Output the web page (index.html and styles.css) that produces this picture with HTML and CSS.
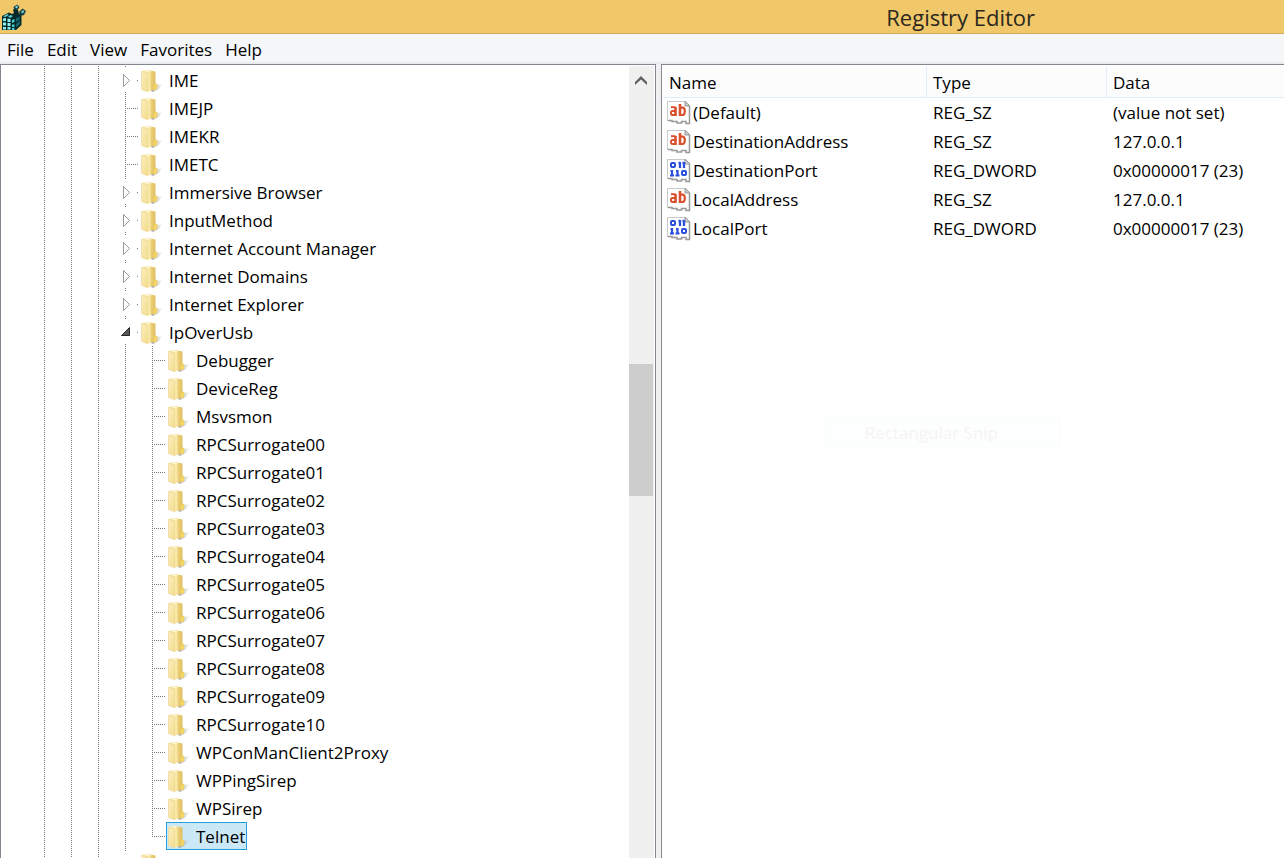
FILE: index.html
```
<!DOCTYPE html>
<html lang="en">
<head>
<meta charset="utf-8">
<title>Registry Editor</title>
<link rel="stylesheet" href="styles.css">
</head>
<body>
<svg class="defs" aria-hidden="true">
  <defs>
    <linearGradient id="gold" x1="0" y1="0" x2="1" y2="0">
      <stop offset="0" stop-color="#f8e6a0"/><stop offset="0.6" stop-color="#eed27c"/><stop offset="1" stop-color="#e0bf62"/>
    </linearGradient>
    <linearGradient id="cover" x1="0" y1="0" x2="1" y2="1">
      <stop offset="0" stop-color="#fbefc0"/><stop offset="1" stop-color="#f3dc8c"/>
    </linearGradient>
    <linearGradient id="shade" x1="0" y1="0" x2="1" y2="0">
      <stop offset="0" stop-color="#888" stop-opacity="0.8"/><stop offset="1" stop-color="#bbb" stop-opacity="0.1"/>
    </linearGradient>
  </defs>
  <symbol id="folder" viewBox="0 0 24 24">
    <path d="M12 22L17 16L23.500 15L20 20L14 23Z" fill="url(#shade)"/>
    <path d="M3 2L9 1L16.500 2.500V20.500L9 22L3 20Z" fill="url(#gold)"/>
    <path d="M4 1.500L9 1L12 2.500L9 4Z" fill="#fcf4cf"/>
    <path d="M2.500 2.500L9 4V22.800L2.500 20.500Z" fill="url(#cover)" stroke="#ecd796" stroke-width="0.700"/>
    <path d="M9 4L11.500 3.200V21.800L9 22.800Z" fill="#f8e8a6"/>
    <path d="M15 15H18V19.500L16 21H14.500Z" fill="#f6d866" stroke="#e2c253" stroke-width="0.500"/>
  </symbol>
  <symbol id="tee" viewBox="0 0 27 28">
    <path d="M13.500 0V28M13 14.500H27" stroke="#777" stroke-dasharray="1 1" fill="none"/>
  </symbol>
  <symbol id="last" viewBox="0 0 27 28">
    <path d="M13.500 0V15M13 14.500H27" stroke="#777" stroke-dasharray="1 1" fill="none"/>
  </symbol>
  <symbol id="closed" viewBox="0 0 27 28">
    <path d="M13.500 0V2M13.500 26V28M25 14.500H28" stroke="#777" stroke-dasharray="1 1" fill="none"/>
    <path d="M11.500 8.500V20.500L17.500 14.500Z" fill="#fff" stroke="#999"/>
  </symbol>
  <symbol id="open" viewBox="0 0 27 28">
    <path d="M13.500 0V2M13.500 26V28M25 14.500H28" stroke="#777" stroke-dasharray="1 1" fill="none"/>
    <path d="M17.500 9.500V17.500H9.500Z" fill="#595959" stroke="#262626"/>
  </symbol>
  <symbol id="page" viewBox="0 0 24 24">
    <path d="M.5 .5H18L23 5V22.500H19L16 19.500L13.500 21.500H9L6 19.500H.5Z" fill="#fff"/>
    <path d="M.5 20V.5H18" fill="none" stroke="#c9c9c9"/>
    <path d="M18 0L23 5H18Z" fill="#ccc" stroke="#999"/>
    <path d="M22.500 5V22.500H19V20.500H14.500V22H10V20.500H5V19.500H1" fill="none" stroke="#999" stroke-width="1.500"/>
  </symbol>
  <symbol id="string" viewBox="0 0 24 24">
    <use href="#page"/>
    <g fill="none" stroke="#d9512c">
      <path d="M4 6.200H8.500" stroke-width="2"/>
      <path d="M8.500 6V15" stroke-width="2.600"/>
      <path d="M8.500 10H5.500Q4 10 4 12T5.500 14H8.500" stroke-width="2"/>
      <path d="M13 3V15" stroke-width="2.600"/>
      <path d="M13 6.700H16Q17.800 7 17.800 10.300T16 14H13" stroke-width="2.200"/>
    </g>
  </symbol>
  <symbol id="binary" viewBox="0 0 24 24">
    <use href="#page"/>
    <g fill="none" stroke="#2b4fdc" stroke-width="2">
      <rect x="4" y="4" width="4" height="4" rx="1"/>
      <path d="M13 3V9M11.500 4H13M17 3V9M15.500 4H17" stroke-width="2.300"/>
      <path d="M5 11V17M3.500 12H5M10.500 11V17M9 12H10.500M3 16.500H7M8.500 16.500H12.500" stroke-width="2.200"/>
      <rect x="15" y="12" width="4" height="4" rx="1"/>
    </g>
  </symbol>
</svg>

<header class="titlebar">
  <svg class="logo" viewBox="0 0 26 26" aria-hidden="true">
    <path d="M2 13L9 9.500L12 11L14 10L13 7L15 5L18 7L19 11L21.500 11V22L15 28H2Z" fill="#06282b" transform="translate(0 -1)"/>
    <path d="M13.500 3L17 .5L19.500 3L17.500 6L14.500 6Z" fill="#123f43"/>
    <path d="M15 3L17 1.500L18 3L16.500 4.500Z" fill="#8ddbe0"/>
    <path d="M19 8L22.500 4.500L26 7L24 11L20 12Z" fill="#123f43"/>
    <path d="M21 8L23 6L24.500 7.500L22.500 9.500Z" fill="#79cbd2"/>
    <path d="M3 12.500L7 10L9 11L5.500 13ZM8 12.800L10.500 11L13 12L10.500 14Z" fill="#5cc8cb"/>
    <path d="M3 14.500L6 14V17H3ZM7.500 14.500L10.500 15V18H7.500ZM3 18.500H6V21.500H3ZM7.500 19H10.500V22H7.500ZM3 23H6V25.500H3ZM7.500 23H10.500V25.500H7.500Z" fill="#8af2f1"/>
    <path d="M12 16L14.500 15V18L12 19ZM12 20.500H14.500V23H12ZM12 24H14.500V26H12Z" fill="#3ecfd0"/>
    <path d="M16 14L19.500 12.500V16L16 18ZM16 20L20 17V20L16 23.500Z" fill="#14666a"/>
  </svg>
  <h1 class="title">Registry Editor</h1>
</header>

<nav class="menubar" aria-label="Menu">
  <button type="button">File</button>
  <button type="button">Edit</button>
  <button type="button">View</button>
  <button type="button">Favorites</button>
  <button type="button">Help</button>
</nav>

<main class="panes">
  <section class="pane tree-pane" aria-label="Keys">
    <ul class="tree">
      <li><div class="row"><button class="branch" type="button" aria-label="Expand IME"><svg><use href="#closed"/></svg></button><a class="key" href="#"><svg><use href="#folder"/></svg>IME</a></div></li>
      <li><div class="row"><svg class="branch"><use href="#tee"/></svg><a class="key" href="#"><svg><use href="#folder"/></svg>IMEJP</a></div></li>
      <li><div class="row"><svg class="branch"><use href="#tee"/></svg><a class="key" href="#"><svg><use href="#folder"/></svg>IMEKR</a></div></li>
      <li><div class="row"><svg class="branch"><use href="#tee"/></svg><a class="key" href="#"><svg><use href="#folder"/></svg>IMETC</a></div></li>
      <li><div class="row"><button class="branch" type="button" aria-label="Expand Immersive Browser"><svg><use href="#closed"/></svg></button><a class="key" href="#"><svg><use href="#folder"/></svg>Immersive Browser</a></div></li>
      <li><div class="row"><button class="branch" type="button" aria-label="Expand InputMethod"><svg><use href="#closed"/></svg></button><a class="key" href="#"><svg><use href="#folder"/></svg>InputMethod</a></div></li>
      <li><div class="row"><button class="branch" type="button" aria-label="Expand Internet Account Manager"><svg><use href="#closed"/></svg></button><a class="key" href="#"><svg><use href="#folder"/></svg>Internet Account Manager</a></div></li>
      <li><div class="row"><button class="branch" type="button" aria-label="Expand Internet Domains"><svg><use href="#closed"/></svg></button><a class="key" href="#"><svg><use href="#folder"/></svg>Internet Domains</a></div></li>
      <li><div class="row"><button class="branch" type="button" aria-label="Expand Internet Explorer"><svg><use href="#closed"/></svg></button><a class="key" href="#"><svg><use href="#folder"/></svg>Internet Explorer</a></div></li>
      <li><div class="row"><button class="branch" type="button" aria-label="Collapse IpOverUsb" aria-expanded="true"><svg><use href="#open"/></svg></button><a class="key" href="#"><svg><use href="#folder"/></svg>IpOverUsb</a></div>
        <ul class="subtree">
          <li><div class="row"><svg class="branch"><use href="#tee"/></svg><a class="key" href="#"><svg><use href="#folder"/></svg>Debugger</a></div></li>
          <li><div class="row"><svg class="branch"><use href="#tee"/></svg><a class="key" href="#"><svg><use href="#folder"/></svg>DeviceReg</a></div></li>
          <li><div class="row"><svg class="branch"><use href="#tee"/></svg><a class="key" href="#"><svg><use href="#folder"/></svg>Msvsmon</a></div></li>
          <li><div class="row"><svg class="branch"><use href="#tee"/></svg><a class="key" href="#"><svg><use href="#folder"/></svg>RPCSurrogate00</a></div></li>
          <li><div class="row"><svg class="branch"><use href="#tee"/></svg><a class="key" href="#"><svg><use href="#folder"/></svg>RPCSurrogate01</a></div></li>
          <li><div class="row"><svg class="branch"><use href="#tee"/></svg><a class="key" href="#"><svg><use href="#folder"/></svg>RPCSurrogate02</a></div></li>
          <li><div class="row"><svg class="branch"><use href="#tee"/></svg><a class="key" href="#"><svg><use href="#folder"/></svg>RPCSurrogate03</a></div></li>
          <li><div class="row"><svg class="branch"><use href="#tee"/></svg><a class="key" href="#"><svg><use href="#folder"/></svg>RPCSurrogate04</a></div></li>
          <li><div class="row"><svg class="branch"><use href="#tee"/></svg><a class="key" href="#"><svg><use href="#folder"/></svg>RPCSurrogate05</a></div></li>
          <li><div class="row"><svg class="branch"><use href="#tee"/></svg><a class="key" href="#"><svg><use href="#folder"/></svg>RPCSurrogate06</a></div></li>
          <li><div class="row"><svg class="branch"><use href="#tee"/></svg><a class="key" href="#"><svg><use href="#folder"/></svg>RPCSurrogate07</a></div></li>
          <li><div class="row"><svg class="branch"><use href="#tee"/></svg><a class="key" href="#"><svg><use href="#folder"/></svg>RPCSurrogate08</a></div></li>
          <li><div class="row"><svg class="branch"><use href="#tee"/></svg><a class="key" href="#"><svg><use href="#folder"/></svg>RPCSurrogate09</a></div></li>
          <li><div class="row"><svg class="branch"><use href="#tee"/></svg><a class="key" href="#"><svg><use href="#folder"/></svg>RPCSurrogate10</a></div></li>
          <li><div class="row"><svg class="branch"><use href="#tee"/></svg><a class="key" href="#"><svg><use href="#folder"/></svg>WPConManClient2Proxy</a></div></li>
          <li><div class="row"><svg class="branch"><use href="#tee"/></svg><a class="key" href="#"><svg><use href="#folder"/></svg>WPPingSirep</a></div></li>
          <li><div class="row"><svg class="branch"><use href="#tee"/></svg><a class="key" href="#"><svg><use href="#folder"/></svg>WPSirep</a></div></li>
          <li><div class="row"><svg class="branch"><use href="#last"/></svg><a class="key selected" href="#" aria-current="true"><svg><use href="#folder"/></svg>Telnet</a></div></li>
        </ul>
      </li>
      <li><div class="row"><button class="branch" type="button" aria-label="Expand IpOverUsbSdk"><svg><use href="#closed"/></svg></button><a class="key" href="#"><svg><use href="#folder"/></svg>IpOverUsbSdk</a></div></li>
    </ul>
    <div class="scrollbar">
      <button class="scroll-up" type="button" aria-label="Scroll up"><svg viewBox="0 0 12 9"><path d="M0 6L6 0L12 6V9L6 3.500L0 9Z" fill="#606060"/></svg></button>
      <div class="track-before"></div>
      <div class="thumb"></div>
      <div class="track-after"></div>
    </div>
  </section>

  <section class="pane value-pane" aria-label="Values">
    <table class="values">
      <colgroup><col class="col-name"><col class="col-type"><col></colgroup>
      <thead><tr><th>Name</th><th>Type</th><th>Data</th></tr></thead>
      <tbody>
        <tr><td><span class="value"><svg><use href="#string"/></svg>(Default)</span></td><td>REG_SZ</td><td>(value not set)</td></tr>
        <tr><td><span class="value"><svg><use href="#string"/></svg>DestinationAddress</span></td><td>REG_SZ</td><td>127.0.0.1</td></tr>
        <tr><td><span class="value"><svg><use href="#binary"/></svg>DestinationPort</span></td><td>REG_DWORD</td><td>0x00000017 (23)</td></tr>
        <tr><td><span class="value"><svg><use href="#string"/></svg>LocalAddress</span></td><td>REG_SZ</td><td>127.0.0.1</td></tr>
        <tr><td><span class="value"><svg><use href="#binary"/></svg>LocalPort</span></td><td>REG_DWORD</td><td>0x00000017 (23)</td></tr>
      </tbody>
    </table>
    <div class="snip-ghost">Rectangular Snip</div>
  </section>
</main>
</body>
</html>
```
FILE: styles.css
```
* { box-sizing: border-box; }

body {
  margin: 0;
  height: 100vh;
  overflow: hidden;
  display: flex;
  flex-direction: column;
  background: #f0f0f0;
  color: #000;
  font: 17px/28px "Open Sans", "Noto Sans", sans-serif;
}

button {
  margin: 0;
  padding: 0;
  border: 0;
  background: none;
  color: inherit;
  font: inherit;
}

a { color: inherit; text-decoration: none; }
ul { margin: 0; padding: 0; list-style: none; }
svg { display: block; flex: none; }
.defs { position: absolute; width: 0; height: 0; }

.titlebar {
  flex: none;
  display: flex;
  align-items: center;
  height: 34px;
  background: #f0c869;
  border-bottom: 1px solid #cfa955;
}
.logo { width: 26px; height: 26px; }
.title {
  margin: 0 0 0 67%;
  color: #2b2720;
  font-size: 22px;
  font-weight: 400;
  line-height: 32px;
  white-space: nowrap;
}

.menubar {
  flex: none;
  display: flex;
  gap: 13px;
  height: 30px;
  padding: 2px 7px 0;
  background: #f4f6f8;
  border-bottom: 2px solid #e8eaec;
}

.panes {
  flex: 1;
  min-height: 0;
  display: grid;
  grid-template-columns: minmax(0, 656fr) minmax(0, 623fr);
  gap: 5px;
}
.pane {
  min-height: 0;
  overflow: hidden;
  background: #fff;
  border: 1px solid #828790;
  border-bottom: 0;
}

.tree-pane { display: flex; padding: 1px 1px 0 0; }
.tree {
  flex: 1;
  padding-left: 111px;
  background:
    repeating-linear-gradient(#777 0 1px, transparent 1px 2px) 43px 0 / 1px 100% no-repeat,
    repeating-linear-gradient(#777 0 1px, transparent 1px 2px) 70px 0 / 1px 100% no-repeat,
    repeating-linear-gradient(#777 0 1px, transparent 1px 2px) 97px 0 / 1px 100% no-repeat;
}
.subtree {
  padding-left: 27px;
  background: repeating-linear-gradient(#777 0 1px, transparent 1px 2px) 13px 0 / 1px 100% no-repeat;
}
.row { display: flex; height: 28px; }
.branch, .branch svg { width: 27px; height: 28px; }
.key {
  display: flex;
  align-items: center;
  gap: 6px;
  padding: 1px 2px 0 0;
  line-height: 27px;
  white-space: nowrap;
}
.key svg { width: 24px; height: 24px; }
.selected { background: #cbe8f6; outline: 1px solid #26a0da; outline-offset: -1px; }

.scrollbar {
  flex: none;
  display: flex;
  flex-direction: column;
  width: 25px;
  padding-right: 1px;
  background: #f0f0f0;
}
.scroll-up { display: flex; justify-content: center; padding-top: 10px; height: 30px; }
.scroll-up svg { width: 12px; height: 9px; }
.track-before { flex: 268; }
.thumb { flex: 132; background: #cdcdcd; }
.track-after { flex: 362; }

.value-pane { position: relative; padding: 1px 0 0 1px; border-right: 0; }
.values {
  width: 100%;
  table-layout: fixed;
  border-collapse: separate;
  border-spacing: 0;
}
.col-name { width: 264px; }
.col-type { width: 180px; }
.values th {
  height: 31px;
  padding: 2px 6px 0;
  line-height: 29px;
  background: #fcfcfc;
  border-right: 1px solid #e2ecfb;
  border-bottom: 1px solid #e2ecfb;
  font-weight: 400;
  text-align: left;
}
.values th:last-child { border-right: 0; }
.values td { height: 29px; padding: 0 6px; line-height: 29px; white-space: nowrap; }
.values td:first-child { padding-left: 4px; }
.value { display: flex; align-items: center; gap: 2px; }
.value svg { width: 24px; height: 24px; }

.snip-ghost {
  position: absolute;
  left: 26%;
  top: 351px;
  width: 237px;
  padding: 1px 0 0 40px;
  line-height: 29px;
  background: #fdfffe;
  border: 1px solid #fafdfc;
  color: #f6f3f5;
}
```
